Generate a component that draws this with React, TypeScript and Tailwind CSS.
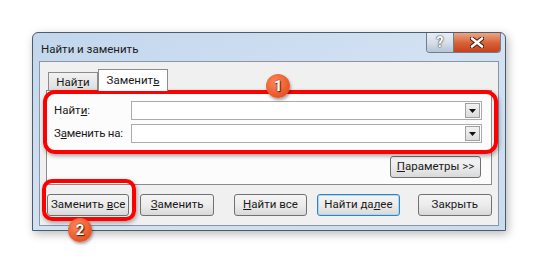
import type { ReactNode } from 'react'

const font = { fontFamily: 'Roboto, "Noto Sans", sans-serif' }

function Btn({ children, className = '', primary = false }: { children: ReactNode; className?: string; primary?: boolean }) {
  return (
    <div
      className={
        'flex h-[22px] items-center justify-center rounded-[3px] border bg-gradient-to-b from-[#f4f4f4] via-[#ececec] to-[#d9d9d9] text-[11.5px] text-[#1a1a1a] ' +
        (primary ? 'border-[#3c7fb1] shadow-[inset_0_0_0_1px_#9fdcfb] ' : 'border-[#707070] ') +
        className
      }
    >
      {children}
    </div>
  )
}

function Combo() {
  return (
    <div className="flex h-[19px] flex-1 border border-[#ababab] bg-white">
      <div className="flex-1" />
      <div className="m-px flex w-[15px] items-center justify-center border border-[#a0a0a0] bg-gradient-to-b from-[#f2f2f2] to-[#dcdcdc]">
        <svg width="7" height="4" viewBox="0 0 7 4">
          <path d="M0 0h7L3.5 4z" fill="#111" />
        </svg>
      </div>
    </div>
  )
}

function Badge({ n, className }: { n: string; className: string }) {
  return (
    <div
      className={
        'absolute flex h-[24px] w-[24px] items-center justify-center rounded-full bg-[radial-gradient(circle_at_40%_35%,#ff8a5c,#ea5a2c_60%,#d9461d)] text-[15px] font-bold text-white shadow-[1px_2px_3px_rgba(0,0,0,0.35)] ' +
        className
      }
      style={{ textShadow: '0 0 2px #5a1a05, 1px 1px 1px #5a1a05' }}
    >
      {n}
    </div>
  )
}

export default function App() {
  return (
    <div className="relative h-[264px] w-[540px] overflow-hidden bg-white pl-[32px] pt-[32px]" style={font}>
      {/* dialog window */}
      <div className="flex h-[199px] w-[474px] flex-col rounded-t-[6px] border border-[#4d5b6c] bg-gradient-to-br from-[#c2d6ec] via-[#d3e2f2] to-[#c9dcef] shadow-[2px_3px_10px_rgba(0,0,0,0.28)]">
        <div className="flex h-[28px] items-start">
          <span className="pl-[8px] pt-[8px] text-[11.5px] text-[#1b1b1b]">Найти и заменить</span>
          <div className="ml-auto mr-[4px] flex h-[20px] overflow-hidden rounded-b-[4px] border border-t-0 border-[#6f7d8d]">
            <div className="flex w-[26px] items-center justify-center bg-gradient-to-b from-[#e6edf5] via-[#d6e0ea] to-[#b7c4d2] text-[14px] font-bold text-white" style={{ textShadow: '0 0 2px #333, 0 0 1px #333' }}>
              ?
            </div>
            <div className="flex w-[47px] items-center justify-center border-l border-[#6f7d8d] bg-gradient-to-b from-[#e8a782] via-[#d9633a] to-[#c4401b]">
              <svg width="14" height="11" viewBox="0 0 14 11">
                <path d="M2 1.5l10 8M12 1.5l-10 8" stroke="#4a1a08" strokeWidth="4.5" strokeLinecap="round" />
                <path d="M2 1.5l10 8M12 1.5l-10 8" stroke="#fff" strokeWidth="2.6" strokeLinecap="round" />
              </svg>
            </div>
          </div>
        </div>

        {/* client area */}
        <div className="mx-[6px] flex flex-1 flex-col border border-[#8a96a6] bg-[#f0f0f0] px-[6px] pt-[7px]">
          <div className="flex items-end pl-[2px]">
            <div className="flex h-[18px] w-[50px] items-center justify-center border border-b-0 border-[#8c8c8c] bg-gradient-to-b from-[#f2f2f2] to-[#dedede] pt-[2px] text-[11.5px] text-[#1a1a1a]">
              <span>
                Най<u>т</u>и
              </span>
            </div>
            <div className="relative z-10 -mb-px flex h-[22px] w-[70px] items-center justify-center border border-b-0 border-[#8c8c8c] bg-white text-[11.5px] text-[#1a1a1a]">
              <span>
                Заменит<u>ь</u>
              </span>
            </div>
          </div>
          <div className="flex h-[95px] flex-col border border-[#8c8c8c] bg-[#fcfcfc] pl-[7px] pr-[9px] pt-[10px]">
            <div className="flex items-center">
              <span className="w-[77px] text-[11.5px] text-[#1a1a1a]">
                Найт<u>и</u>:
              </span>
              <Combo />
            </div>
            <div className="mt-[4px] flex items-center">
              <span className="w-[77px] text-[11.5px] tracking-[-0.2px] text-[#1a1a1a]">
                З<u>а</u>менить на:
              </span>
              <Combo />
            </div>
            <div className="mt-[13px] flex justify-end pr-px">
              <Btn className="w-[91px]">
                <span>
                  <u>П</u>араметры &gt;&gt;
                </span>
              </Btn>
            </div>
          </div>
          <div className="mt-[9px] flex">
            <Btn className="ml-[1px] w-[83px]">
              <span>
                Заменить <u>в</u>се
              </span>
            </Btn>
            <Btn className="ml-[11px] w-[74px]">
              <span>
                <u>З</u>аменить
              </span>
            </Btn>
            <Btn className="ml-[20px] w-[74px]">
              <span>
                <u>Н</u>айти все
              </span>
            </Btn>
            <Btn primary className="ml-[10px] w-[83px]">
              <span>
                Найти да<u>л</u>ее
              </span>
            </Btn>
            <Btn className="ml-[18px] w-[75px]">Закрыть</Btn>
          </div>
        </div>
        <div className="h-[4px]" />
      </div>

      {/* annotations */}
      <div className="absolute left-[43px] top-[90px] h-[64px] w-[455px] rounded-[12px] border-[4px] border-[#ff0000] shadow-[1px_2px_4px_rgba(0,0,0,0.35)]" />
      <div className="absolute left-[42px] top-[179px] h-[42px] w-[94px] rounded-[10px] border-[4px] border-[#ff0000] shadow-[1px_2px_4px_rgba(0,0,0,0.35)]" />
      <Badge n="1" className="left-[266px] top-[74px]" />
      <Badge n="2" className="left-[68px] top-[218px]" />
    </div>
  )
}
